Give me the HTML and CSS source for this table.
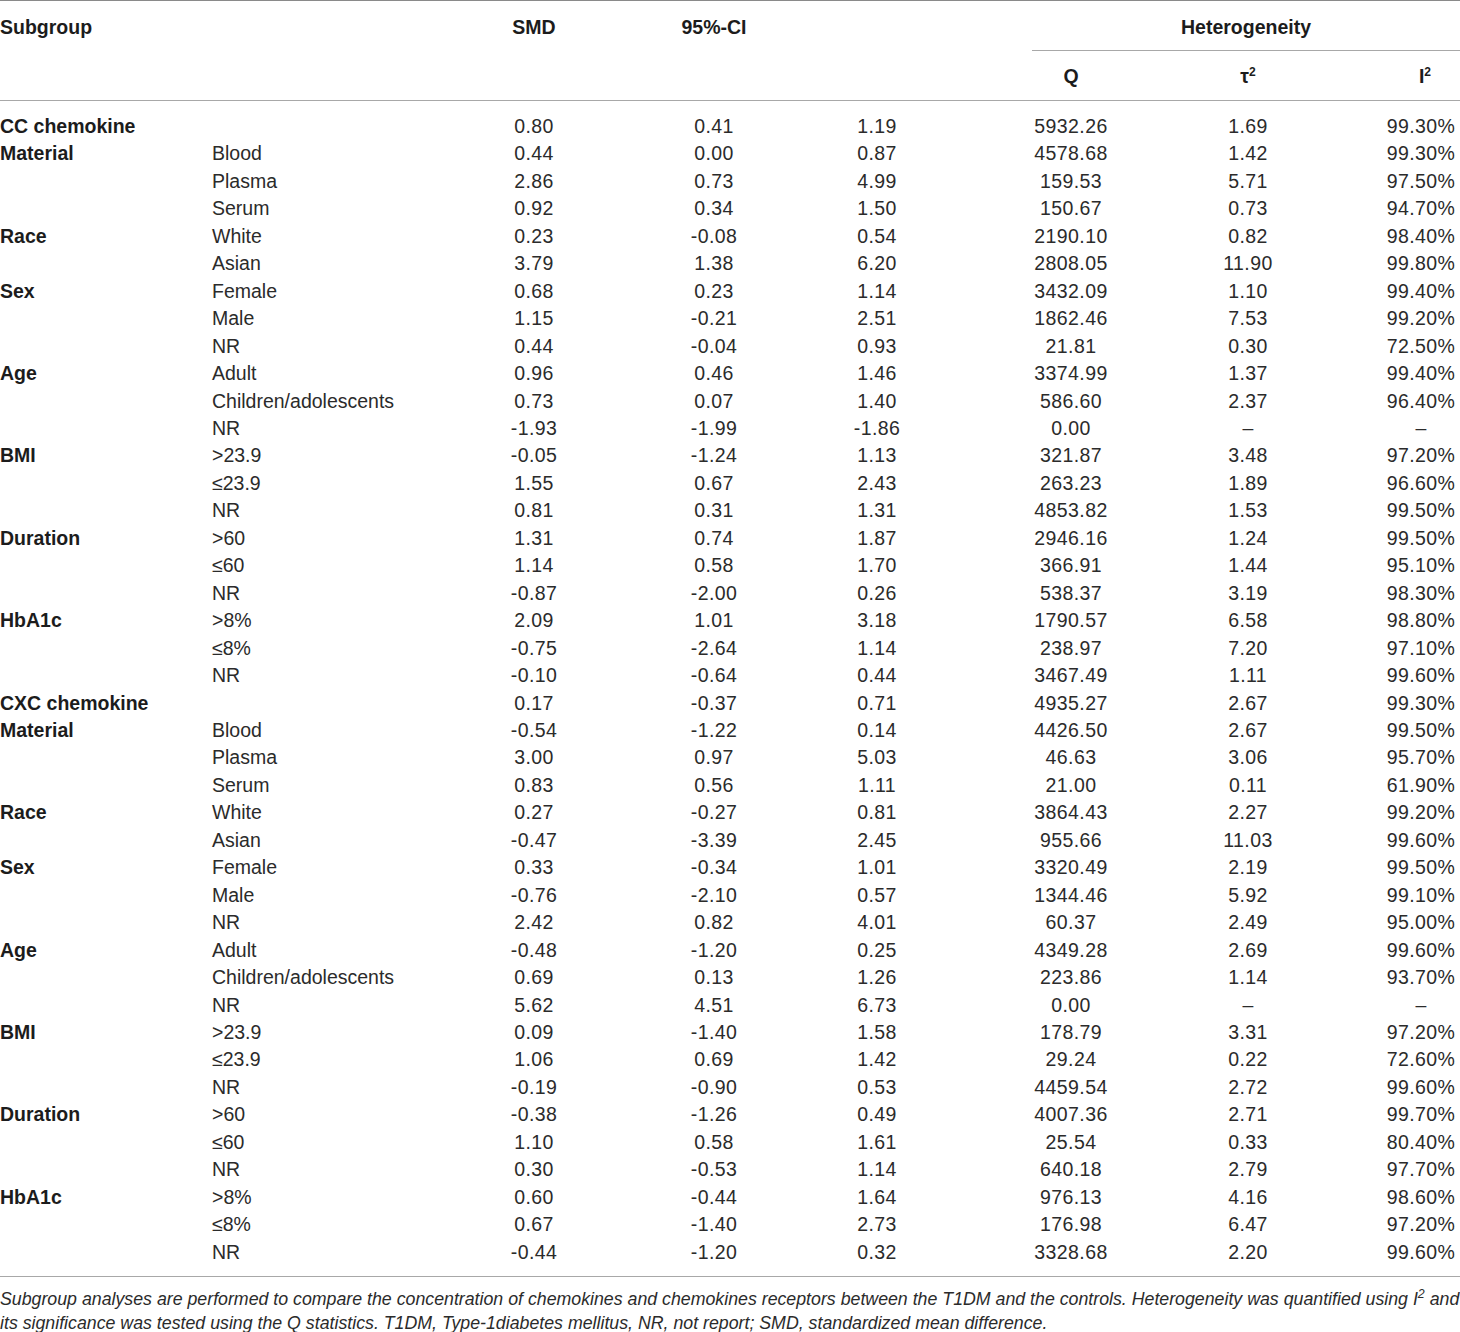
FILE: index.html
```html
<!DOCTYPE html>
<html lang="en">
<head>
    <meta charset="UTF-8">
    <meta name="viewport" content="width=device-width, initial-scale=1.0">
    <title>Subgroup analyses of chemokines</title>
    <link rel="stylesheet" href="styles.css">
</head>
<body>
<div class="page">
    <table class="results">
        <colgroup>
            <col class="c-group">
            <col class="c-sub">
            <col class="c-smd">
            <col class="c-low">
            <col class="c-high">
            <col class="c-q">
            <col class="c-tau">
            <col class="c-i2">
        </colgroup>
        <thead>
            <tr class="head-top">
                <th class="left">Subgroup</th>
                <th></th>
                <th>SMD</th>
                <th class="ci">95%-CI</th>
                <th></th>
                <th colspan="3" class="het"><div class="het-label">Heterogeneity</div></th>
            </tr>
            <tr class="head-sub">
                <th></th>
                <th></th>
                <th></th>
                <th></th>
                <th></th>
                <th>Q</th>
                <th class="tau">&tau;<sup>2</sup></th>
                <th class="i2">I<sup>2</sup></th>
            </tr>
        </thead>
        <tbody>
            <tr class="first"><td class="grp">CC chemokine</td><td></td><td>0.80</td><td>0.41</td><td>1.19</td><td>5932.26</td><td class="tau">1.69</td><td class="i2">99.30%</td></tr>
            <tr><td class="grp">Material</td><td class="sub">Blood</td><td>0.44</td><td>0.00</td><td>0.87</td><td>4578.68</td><td class="tau">1.42</td><td class="i2">99.30%</td></tr>
            <tr><td></td><td class="sub">Plasma</td><td>2.86</td><td>0.73</td><td>4.99</td><td>159.53</td><td class="tau">5.71</td><td class="i2">97.50%</td></tr>
            <tr><td></td><td class="sub">Serum</td><td>0.92</td><td>0.34</td><td>1.50</td><td>150.67</td><td class="tau">0.73</td><td class="i2">94.70%</td></tr>
            <tr><td class="grp">Race</td><td class="sub">White</td><td>0.23</td><td>-0.08</td><td>0.54</td><td>2190.10</td><td class="tau">0.82</td><td class="i2">98.40%</td></tr>
            <tr><td></td><td class="sub">Asian</td><td>3.79</td><td>1.38</td><td>6.20</td><td>2808.05</td><td class="tau">11.90</td><td class="i2">99.80%</td></tr>
            <tr><td class="grp">Sex</td><td class="sub">Female</td><td>0.68</td><td>0.23</td><td>1.14</td><td>3432.09</td><td class="tau">1.10</td><td class="i2">99.40%</td></tr>
            <tr><td></td><td class="sub">Male</td><td>1.15</td><td>-0.21</td><td>2.51</td><td>1862.46</td><td class="tau">7.53</td><td class="i2">99.20%</td></tr>
            <tr><td></td><td class="sub">NR</td><td>0.44</td><td>-0.04</td><td>0.93</td><td>21.81</td><td class="tau">0.30</td><td class="i2">72.50%</td></tr>
            <tr><td class="grp">Age</td><td class="sub">Adult</td><td>0.96</td><td>0.46</td><td>1.46</td><td>3374.99</td><td class="tau">1.37</td><td class="i2">99.40%</td></tr>
            <tr><td></td><td class="sub">Children/adolescents</td><td>0.73</td><td>0.07</td><td>1.40</td><td>586.60</td><td class="tau">2.37</td><td class="i2">96.40%</td></tr>
            <tr><td></td><td class="sub">NR</td><td>-1.93</td><td>-1.99</td><td>-1.86</td><td>0.00</td><td class="tau">&ndash;</td><td class="i2">&ndash;</td></tr>
            <tr><td class="grp">BMI</td><td class="sub">&gt;23.9</td><td>-0.05</td><td>-1.24</td><td>1.13</td><td>321.87</td><td class="tau">3.48</td><td class="i2">97.20%</td></tr>
            <tr><td></td><td class="sub">&le;23.9</td><td>1.55</td><td>0.67</td><td>2.43</td><td>263.23</td><td class="tau">1.89</td><td class="i2">96.60%</td></tr>
            <tr><td></td><td class="sub">NR</td><td>0.81</td><td>0.31</td><td>1.31</td><td>4853.82</td><td class="tau">1.53</td><td class="i2">99.50%</td></tr>
            <tr><td class="grp">Duration</td><td class="sub">&gt;60</td><td>1.31</td><td>0.74</td><td>1.87</td><td>2946.16</td><td class="tau">1.24</td><td class="i2">99.50%</td></tr>
            <tr><td></td><td class="sub">&le;60</td><td>1.14</td><td>0.58</td><td>1.70</td><td>366.91</td><td class="tau">1.44</td><td class="i2">95.10%</td></tr>
            <tr><td></td><td class="sub">NR</td><td>-0.87</td><td>-2.00</td><td>0.26</td><td>538.37</td><td class="tau">3.19</td><td class="i2">98.30%</td></tr>
            <tr><td class="grp">HbA1c</td><td class="sub">&gt;8%</td><td>2.09</td><td>1.01</td><td>3.18</td><td>1790.57</td><td class="tau">6.58</td><td class="i2">98.80%</td></tr>
            <tr><td></td><td class="sub">&le;8%</td><td>-0.75</td><td>-2.64</td><td>1.14</td><td>238.97</td><td class="tau">7.20</td><td class="i2">97.10%</td></tr>
            <tr><td></td><td class="sub">NR</td><td>-0.10</td><td>-0.64</td><td>0.44</td><td>3467.49</td><td class="tau">1.11</td><td class="i2">99.60%</td></tr>
            <tr><td class="grp">CXC chemokine</td><td></td><td>0.17</td><td>-0.37</td><td>0.71</td><td>4935.27</td><td class="tau">2.67</td><td class="i2">99.30%</td></tr>
            <tr><td class="grp">Material</td><td class="sub">Blood</td><td>-0.54</td><td>-1.22</td><td>0.14</td><td>4426.50</td><td class="tau">2.67</td><td class="i2">99.50%</td></tr>
            <tr><td></td><td class="sub">Plasma</td><td>3.00</td><td>0.97</td><td>5.03</td><td>46.63</td><td class="tau">3.06</td><td class="i2">95.70%</td></tr>
            <tr><td></td><td class="sub">Serum</td><td>0.83</td><td>0.56</td><td>1.11</td><td>21.00</td><td class="tau">0.11</td><td class="i2">61.90%</td></tr>
            <tr><td class="grp">Race</td><td class="sub">White</td><td>0.27</td><td>-0.27</td><td>0.81</td><td>3864.43</td><td class="tau">2.27</td><td class="i2">99.20%</td></tr>
            <tr><td></td><td class="sub">Asian</td><td>-0.47</td><td>-3.39</td><td>2.45</td><td>955.66</td><td class="tau">11.03</td><td class="i2">99.60%</td></tr>
            <tr><td class="grp">Sex</td><td class="sub">Female</td><td>0.33</td><td>-0.34</td><td>1.01</td><td>3320.49</td><td class="tau">2.19</td><td class="i2">99.50%</td></tr>
            <tr><td></td><td class="sub">Male</td><td>-0.76</td><td>-2.10</td><td>0.57</td><td>1344.46</td><td class="tau">5.92</td><td class="i2">99.10%</td></tr>
            <tr><td></td><td class="sub">NR</td><td>2.42</td><td>0.82</td><td>4.01</td><td>60.37</td><td class="tau">2.49</td><td class="i2">95.00%</td></tr>
            <tr><td class="grp">Age</td><td class="sub">Adult</td><td>-0.48</td><td>-1.20</td><td>0.25</td><td>4349.28</td><td class="tau">2.69</td><td class="i2">99.60%</td></tr>
            <tr><td></td><td class="sub">Children/adolescents</td><td>0.69</td><td>0.13</td><td>1.26</td><td>223.86</td><td class="tau">1.14</td><td class="i2">93.70%</td></tr>
            <tr><td></td><td class="sub">NR</td><td>5.62</td><td>4.51</td><td>6.73</td><td>0.00</td><td class="tau">&ndash;</td><td class="i2">&ndash;</td></tr>
            <tr><td class="grp">BMI</td><td class="sub">&gt;23.9</td><td>0.09</td><td>-1.40</td><td>1.58</td><td>178.79</td><td class="tau">3.31</td><td class="i2">97.20%</td></tr>
            <tr><td></td><td class="sub">&le;23.9</td><td>1.06</td><td>0.69</td><td>1.42</td><td>29.24</td><td class="tau">0.22</td><td class="i2">72.60%</td></tr>
            <tr><td></td><td class="sub">NR</td><td>-0.19</td><td>-0.90</td><td>0.53</td><td>4459.54</td><td class="tau">2.72</td><td class="i2">99.60%</td></tr>
            <tr><td class="grp">Duration</td><td class="sub">&gt;60</td><td>-0.38</td><td>-1.26</td><td>0.49</td><td>4007.36</td><td class="tau">2.71</td><td class="i2">99.70%</td></tr>
            <tr><td></td><td class="sub">&le;60</td><td>1.10</td><td>0.58</td><td>1.61</td><td>25.54</td><td class="tau">0.33</td><td class="i2">80.40%</td></tr>
            <tr><td></td><td class="sub">NR</td><td>0.30</td><td>-0.53</td><td>1.14</td><td>640.18</td><td class="tau">2.79</td><td class="i2">97.70%</td></tr>
            <tr><td class="grp">HbA1c</td><td class="sub">&gt;8%</td><td>0.60</td><td>-0.44</td><td>1.64</td><td>976.13</td><td class="tau">4.16</td><td class="i2">98.60%</td></tr>
            <tr><td></td><td class="sub">&le;8%</td><td>0.67</td><td>-1.40</td><td>2.73</td><td>176.98</td><td class="tau">6.47</td><td class="i2">97.20%</td></tr>
            <tr class="last"><td></td><td class="sub">NR</td><td>-0.44</td><td>-1.20</td><td>0.32</td><td>3328.68</td><td class="tau">2.20</td><td class="i2">99.60%</td></tr>
        </tbody>
    </table>

    <p class="note">Subgroup analyses are performed to compare the concentration of chemokines and chemokines receptors between the T1DM and the controls. Heterogeneity was quantified using I<sup>2</sup> and<br>its significance was tested using the Q statistics. T1DM, Type-1diabetes mellitus, NR, not report; SMD, standardized mean difference.</p>
</div>
</body>
</html>
```

FILE: styles.css
```css
body {
    margin: 0;
    padding: 0;
    background: #fff;
    color: #2b2b2b;
    font-family: "Liberation Sans", Arial, sans-serif;
}
.page {
    width: 1460px;
}
.results {
    width: 1460px;
    border-collapse: collapse;
    table-layout: fixed;
    border-top: 1px solid #8a8a8a;
    font-size: 19.5px;
}
.c-group { width: 212px; }
.c-sub { width: 228px; }
.c-smd { width: 188px; }
.c-low { width: 172px; }
.c-high { width: 154px; }
.c-q { width: 234px; }
.c-tau { width: 120px; }
.c-i2 { width: 152px; }

th, td {
    padding: 0;
    text-align: center;
    white-space: nowrap;
}
th {
    font-weight: bold;
    color: #1c1c1c;
}
th.left, td.grp, td.sub {
    text-align: left;
}
.head-top th {
    padding: 15px 0 13px;
    line-height: 22px;
    vertical-align: top;
}
.head-top th.het {
    padding: 0;
}
.het-label {
    margin-left: 78px;
    padding: 15px 0 12px;
    line-height: 22px;
    border-bottom: 1px solid #a8a8a8;
}
.head-sub th {
    padding: 14px 0 13px;
    line-height: 22px;
    border-bottom: 1px solid #a8a8a8;
}
.head-sub th.i2 {
    padding-left: 82px;
}
sup {
    font-size: 0.62em;
    line-height: 0;
    vertical-align: 0.55em;
}
td {
    line-height: 27.45px;
    letter-spacing: 0.4px;
}
td.grp {
    font-weight: bold;
    color: #1c1c1c;
    letter-spacing: 0;
}
td.sub {
    letter-spacing: 0;
}
td.i2 {
    padding-left: 74px;
}
.first td {
    padding-top: 12px;
}
.last td {
    padding-bottom: 10px;
    border-bottom: 1px solid #a8a8a8;
}
.note {
    margin: 10px 0 0;
    font-size: 17.75px;
    line-height: 24px;
    font-style: italic;
    color: #2b2b2b;
}
.note sup {
    font-size: 0.7em;
}
```
